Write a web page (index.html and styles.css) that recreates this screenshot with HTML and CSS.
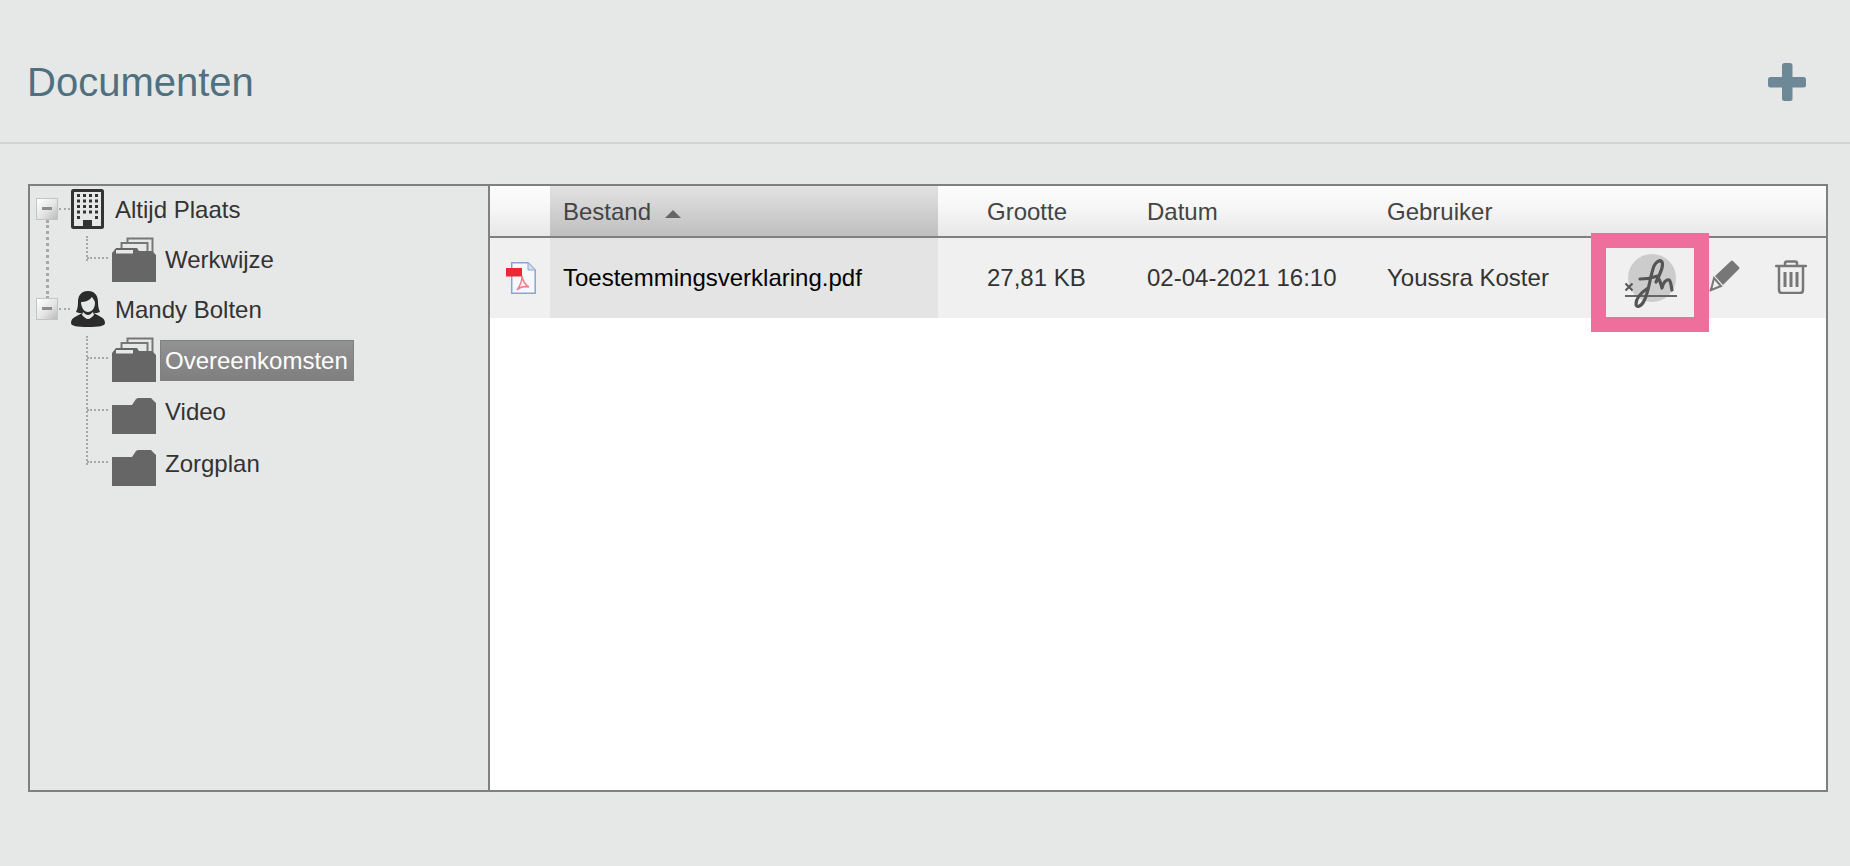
FILE: index.html
```html
<!DOCTYPE html>
<html lang="nl">
<head>
<meta charset="utf-8">
<title>Documenten</title>
<link rel="stylesheet" href="styles.css">
</head>
<body>
<header class="page-head">
  <h1 class="page-title">Documenten</h1>
  <svg class="add-icon" viewBox="0 0 38 38" aria-label="Toevoegen"><rect x="14" y="0" width="10.5" height="38" rx="2.5"/><rect x="0" y="14" width="38" height="10.5" rx="2.5"/></svg>
</header>
<main class="panel">
  <aside class="tree">
    <ul class="tree-roots">
      <li>
        <div class="node root-node">
          <span class="expander"></span><span class="dash"></span>
          <svg class="root-icon" viewBox="0 0 34 40"><rect x="1.5" y="1.5" width="30" height="37" rx="1" fill="none" stroke="#333" stroke-width="3"/><g fill="#333"><rect x="6" y="5" width="3" height="3"/><rect x="12" y="5" width="3" height="3"/><rect x="18" y="5" width="3" height="3"/><rect x="24" y="5" width="3" height="3"/><rect x="6" y="10.500" width="3" height="3"/><rect x="12" y="10.500" width="3" height="3"/><rect x="18" y="10.500" width="3" height="3"/><rect x="24" y="10.500" width="3" height="3"/><rect x="6" y="16" width="3" height="3"/><rect x="12" y="16" width="3" height="3"/><rect x="18" y="16" width="3" height="3"/><rect x="24" y="16" width="3" height="3"/><rect x="6" y="21.500" width="3" height="3"/><rect x="12" y="21.500" width="3" height="3"/><rect x="18" y="21.500" width="3" height="3"/><rect x="24" y="21.500" width="3" height="3"/><rect x="6" y="27" width="3" height="3"/><rect x="24" y="27" width="3" height="3"/><rect x="12" y="31" width="9" height="7"/></g></svg>
          <span class="node-text">Altijd Plaats</span>
        </div>
        <ul class="children">
          <li class="node leaf">
            <svg class="folder" viewBox="0 0 44 46"><rect x="15.500" y="1.500" width="25" height="20" fill="#e6e8e7" stroke="#777" stroke-width="2"/><rect x="9.500" y="6" width="26" height="16" fill="#e6e8e7" stroke="#777" stroke-width="2"/><path fill="#666" d="M0 45V16L4 11H25L27 14H40L44 18V45Z"/><rect x="4" y="13" width="17" height="3.500" fill="#e8e8e8"/></svg>
            <span class="node-text">Werkwijze</span>
          </li>
        </ul>
      </li>
      <li>
        <div class="node root-node">
          <span class="expander"></span><span class="dash"></span>
          <svg class="root-icon" viewBox="0 0 34 36"><path fill="#2b2b2b" d="M17 0C9 0 7 6 7 11c0 5-1 8-2 10 2 1 4 1 6 1-4 3-11 4-11 10 0 3 6 4 17 4s17-1 17-4c0-6-7-7-11-10 2 0 4 0 6-1-1-2-2-5-2-10 0-5-2-11-10-11z"/><path fill="#e6e8e7" d="M10 11c4 0 8-1 11-5 2 3 3 4 3 6 0 5-3 9-7 9s-7-5-7-10zM12 21c2 2 3 3 5 3s3-1 5-3l1 3c-2 2-4 4-6 4s-4-2-6-4z"/></svg>
          <span class="node-text">Mandy Bolten</span>
        </div>
        <ul class="children">
          <li class="node leaf">
            <svg class="folder" viewBox="0 0 44 46"><rect x="15.500" y="1.500" width="25" height="20" fill="#e6e8e7" stroke="#777" stroke-width="2"/><rect x="9.500" y="6" width="26" height="16" fill="#e6e8e7" stroke="#777" stroke-width="2"/><path fill="#666" d="M0 45V16L4 11H25L27 14H40L44 18V45Z"/><rect x="4" y="13" width="17" height="3.500" fill="#e8e8e8"/></svg>
            <span class="node-text node-selected">Overeenkomsten</span>
          </li>
          <li class="node leaf">
            <svg class="folder" viewBox="0 0 44 46"><path fill="#666" d="M0 45V16H20L24 10Q25 9 27 9H39L44 14V45Z"/></svg>
            <span class="node-text">Video</span>
          </li>
          <li class="node leaf">
            <svg class="folder" viewBox="0 0 44 46"><path fill="#666" d="M0 45V16H20L24 10Q25 9 27 9H39L44 14V45Z"/></svg>
            <span class="node-text">Zorgplan</span>
          </li>
        </ul>
      </li>
    </ul>
  </aside>
  <section class="files">
    <div class="grid-row head-row">
      <div class="cell"></div>
      <div class="cell cell-text sorted">Bestand<span class="sort-arrow"></span></div>
      <div class="cell cell-text">Grootte</div>
      <div class="cell cell-text">Datum</div>
      <div class="cell cell-text">Gebruiker</div>
      <div class="cell"></div>
    </div>
    <div class="grid-row file-row">
      <div class="cell cell-icon">
        <svg class="pdf-icon" viewBox="0 0 30 32"><path fill="#f6f8fc" stroke="#8aa5cd" stroke-width="1.500" d="M5.700 .8H22L29.200 8V31.200H5.700Z"/><path fill="#d5e0f0" stroke="#8aa5cd" d="M22 1V8H29"/><rect x="0" y="6" width="16" height="8.500" fill="#ee2737"/><path fill="none" stroke="#f2808a" stroke-width="1.500" d="M16 14c1 5 3 9 7 11-5-1-9 0-12 3 3-4 5-9 5-14z"/></svg>
      </div>
      <div class="cell cell-text sorted file-name">Toestemmingsverklaring.pdf</div>
      <div class="cell cell-text">27,81 KB</div>
      <div class="cell cell-text">02-04-2021 16:10</div>
      <div class="cell cell-text">Youssra Koster</div>
      <div class="cell actions">
        <svg class="sign-icon" viewBox="0 0 60 60"><circle cx="32" cy="24" r="24" fill="#ccc"/><path d="M5 42H57" stroke="#666" stroke-width="2.200"/><path d="M5.500 29.500L12.500 36.500M12.500 29.500L5.500 36.500" stroke="#555" stroke-width="2" fill="none"/><path fill="none" stroke="#555" stroke-width="3.200" stroke-linecap="round" stroke-linejoin="round" d="M36 28C40 20 44 12 42 8C40 5 36 8 34 12C30 22 29 38 24 47C21 53 16 54 16 50C16 44 22 38 28 34M20 25C26 25 32 24 38 22M38 24C40 26 41 30 42 34C43 29 46 25 49 26C51 27 51 32 52 36"/></svg>
        <svg class="pencil-icon" viewBox="0 0 32 32"><path fill="#777" d="M7 16L23 1Q24 0 25 1L31 7Q32 8 31 9L15 25Z"/><path fill="#f0f0f0" stroke="#777" stroke-width="2" d="M6 18L13 26L3 30Z"/><path fill="#777" d="M1 31L5 29L3 27Z"/></svg>
        <svg class="trash-icon" viewBox="0 0 32 34"><path fill="none" stroke="#777" stroke-width="2.500" stroke-linecap="round" stroke-linejoin="round" d="M1 6H31M10 6V3.500Q10 1.500 12 1.500H20Q22 1.500 22 3.500V6M4 6V30Q4 33 7 33H25Q28 33 28 30V6"/><path d="M10 12V27M16 12V27M22 12V27" stroke="#777" stroke-width="3" fill="none"/></svg>
      </div>
      <div class="highlight-box"></div>
    </div>
    <div class="files-empty"></div>
  </section>
</main>
</body>
</html>
```
FILE: styles.css
```css
* { box-sizing: border-box; }
html, body { margin: 0; padding: 0; }
body {
  width: 1850px;
  height: 866px;
  overflow: hidden;
  background: #e6e8e7;
  font-family: "Liberation Sans", Arial, sans-serif;
  font-size: 24px;
  color: #333;
}
ul { list-style: none; margin: 0; padding: 0; }
.page-head {
  height: 144px;
  border-bottom: 2px solid #d0d3d1;
  padding: 22px 44px 0 27px;
  display: flex;
  align-items: center;
  justify-content: space-between;
}
.page-title {
  margin: 0;
  font-size: 40px;
  font-weight: 400;
  color: #50707f;
}
.add-icon { width: 38px; height: 38px; fill: #6d8896; }
.panel {
  margin: 40px 0 0 28px;
  width: 1800px;
  height: 608px;
  border: 2px solid #808080;
  display: grid;
  grid-template-columns: 460px 1336px;
}
.tree {
  position: relative;
  border-right: 2px solid #808080;
  padding-top: 1px;
}
.tree-roots { position: relative; }
.tree-roots::before {
  content: "";
  position: absolute;
  left: 16px;
  top: 33px;
  height: 79px;
  border-left: 3px dotted #a8a8a8;
}
.node { display: flex; align-items: center; position: relative; }
.root-node { height: 44px; padding-left: 6px; }
.expander {
  width: 22px;
  height: 22px;
  flex: none;
  border: 1px solid #c4c4c4;
  background: linear-gradient(135deg, #fff, #e4e4e4 55%, #bbb);
  position: relative;
  z-index: 1;
}
.expander::after {
  content: "";
  position: absolute;
  left: 5px;
  top: 8px;
  width: 10px;
  height: 3px;
  background: #8c8c8c;
}
.dash {
  width: 11px;
  margin-left: 1px;
  flex: none;
  border-top: 2px dotted #a8a8a8;
}
.root-icon { width: 34px; height: 40px; margin-left: 1px; flex: none; }
.root-node .node-text { margin-left: 10px; margin-top: 2px; }
.children { position: relative; margin: 3px 0 1px; }
.children::before {
  content: "";
  position: absolute;
  left: 56px;
  top: 2px;
  bottom: 25px;
  border-left: 2px dotted #a8a8a8;
}
.leaf { height: 52px; padding-left: 82px; }
.leaf::before {
  content: "";
  position: absolute;
  left: 57px;
  top: 23px;
  width: 21px;
  border-top: 2px dotted #a8a8a8;
}
.folder { width: 44px; height: 46px; flex: none; }
.leaf .node-text { margin-left: 9px; }
.leaf .node-selected {
  margin-left: 4px;
  height: 41px;
  line-height: 39px;
  padding: 0 5px 0 4px;
  color: #fff;
  background: linear-gradient(#929292, #7f7f7f);
  border: 1px solid #808080;
  border-bottom-width: 2px;
  white-space: nowrap;
}
.files { background: #fff; }
.grid-row {
  position: relative;
  display: grid;
  grid-template-columns: 60px 388px 160px 240px 241px 247px;
}
.head-row {
  height: 52px;
  border-bottom: 2px solid #808080;
  background: linear-gradient(#fdfdfd, #f6f6f6 45%, #e8e8e8);
  color: #444;
}
.head-row .sorted { background: linear-gradient(#e2e2e2, #bfbfbf); }
.head-row .cell-text { padding-top: 2px; }
.cell { display: flex; align-items: center; white-space: nowrap; }
.cell-text { padding-left: 49px; }
.sorted { padding-left: 13px; }
.sort-arrow {
  width: 0;
  height: 0;
  margin-left: 14px;
  margin-top: 3px;
  border-left: 8px solid transparent;
  border-right: 8px solid transparent;
  border-bottom: 8px solid #666;
}
.file-row { height: 80px; background: #f0f0f0; }
.file-row .sorted { background: #e4e4e4; }
.file-name { color: #000; }
.cell-icon { padding-left: 16px; }
.pdf-icon { width: 30px; height: 32px; }
.actions { padding-left: 0; position: relative; }
.sign-icon { width: 60px; height: 60px; margin-left: 41px; margin-top: 12px; flex: none; }
.pencil-icon { width: 32px; height: 32px; margin-left: 28px; margin-top: -4px; flex: none; }
.trash-icon { width: 32px; height: 34px; margin-left: 35px; margin-top: -2px; flex: none; }
.highlight-box {
  position: absolute;
  left: 1101px;
  top: -5px;
  width: 118px;
  height: 99px;
  border: 15px solid #ef6f9c;
}
.files-empty { height: 470px; }
```
